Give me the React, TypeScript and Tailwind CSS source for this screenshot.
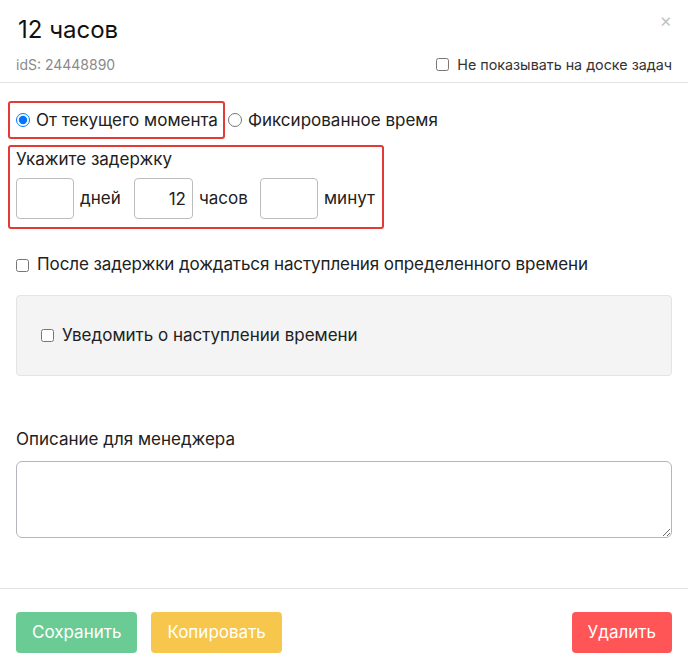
import { useState } from "react";

export default function App() {
  const [mode, setMode] = useState("now");

  return (
    <main className="w-[688px] h-[670px] bg-white text-[#212121] font-['Inter',sans-serif] overflow-hidden">

      {/* HEADER */}
      <div className="relative px-4 pt-[14px] border-b border-[#e3e3e3]">
        <h1 className="text-[24px] leading-[32px] text-[#111] pl-[2px]">12 часов</h1>
        <button className="absolute right-[16px] top-[11px] text-[19px] text-[#c4c4c4] leading-none">×</button>
        <div className="flex items-center justify-between mt-[8px] pb-[7px]">
          <span className="text-[14px] text-[#8a8a8a]">idS: 24448890</span>
          <label className="flex items-center gap-[8px] text-[14.3px] text-[#333]">
            <input type="checkbox" className="w-[13px] h-[13px] m-0" />
            Не показывать на доске задач
          </label>
        </div>
      </div>

      {/* BODY */}
      <div className="px-4 pt-[18px]">

        {/* Mode */}
        <div className="flex items-center -ml-2">
          <label className="flex items-center gap-[6px] border-2 border-[#e53935] rounded-[3px] h-[38px] pl-[6px] pr-[5px] text-[17px]">
            <input
              type="radio"
              name="mode"
              checked={mode === "now"}
              onChange={() => setMode("now")}
              className="w-[14px] h-[14px] m-0"
            />
            От текущего момента
          </label>
          <label className="flex items-center gap-[6px] ml-[3px] text-[17px]">
            <input
              type="radio"
              name="mode"
              checked={mode === "fixed"}
              onChange={() => setMode("fixed")}
              className="w-[14px] h-[14px] m-0"
            />
            Фиксированное время
          </label>
        </div>

        {/* Delay */}
        <div className="-ml-2 mt-[6px] w-[376px] border-2 border-[#e53935] rounded-[3px] pl-[6px] pt-[1px] pb-[8px]">
          <div className="text-[17px] leading-[22px]">Укажите задержку</div>
          <div className="flex items-center mt-[8px] text-[17px]">
            <input className="w-[58px] h-[41px] border border-[#bdbdbd] rounded-[4px] px-2 text-right outline-none" />
            <span className="ml-[6px] w-[54px]">дней</span>
            <input defaultValue="12" className="w-[59px] h-[41px] border border-[#bdbdbd] rounded-[4px] px-[6px] text-right outline-none" />
            <span className="ml-[6px] w-[61px]">часов</span>
            <input className="w-[58px] h-[41px] border border-[#bdbdbd] rounded-[4px] px-2 text-right outline-none" />
            <span className="ml-[6px]">минут</span>
          </div>
        </div>

        {/* Wait */}
        <label className="flex items-center gap-[8px] mt-[23px] text-[17px] tracking-[-0.1px]">
          <input type="checkbox" className="w-[13px] h-[13px] m-0" />
          После задержки дождаться наступления определенного времени
        </label>

        <div className="mt-[17px] h-[81px] bg-[#f4f4f4] border border-[#e4e4e4] rounded-[4px] flex items-center pl-[24px]">
          <label className="flex items-center gap-[8px] text-[17px]">
            <input type="checkbox" className="w-[13px] h-[13px] m-0" />
            Уведомить о наступлении времени
          </label>
        </div>

        {/* Description */}
        <div className="mt-[52px] text-[17px] leading-[22px]">Описание для менеджера</div>
        <textarea className="block w-full mt-[11px] h-[77px] border border-[#b5b5bd] rounded-[6px] p-2 outline-none" />
      </div>

      {/* FOOTER */}
      <div className="mt-[50px] border-t border-[#e3e3e3] px-4 pt-[23px] flex items-center">
        <button className="h-[41px] px-[16px] bg-[#6bcb95] text-white text-[17px] rounded-[4px]">Сохранить</button>
        <button className="ml-[14px] h-[41px] px-[16px] bg-[#f7c64c] text-white text-[17px] rounded-[4px]">Копировать</button>
        <button className="ml-auto h-[41px] px-[16px] bg-[#ff5556] text-white text-[17px] rounded-[4px]">Удалить</button>
      </div>
    </main>
  );
}
